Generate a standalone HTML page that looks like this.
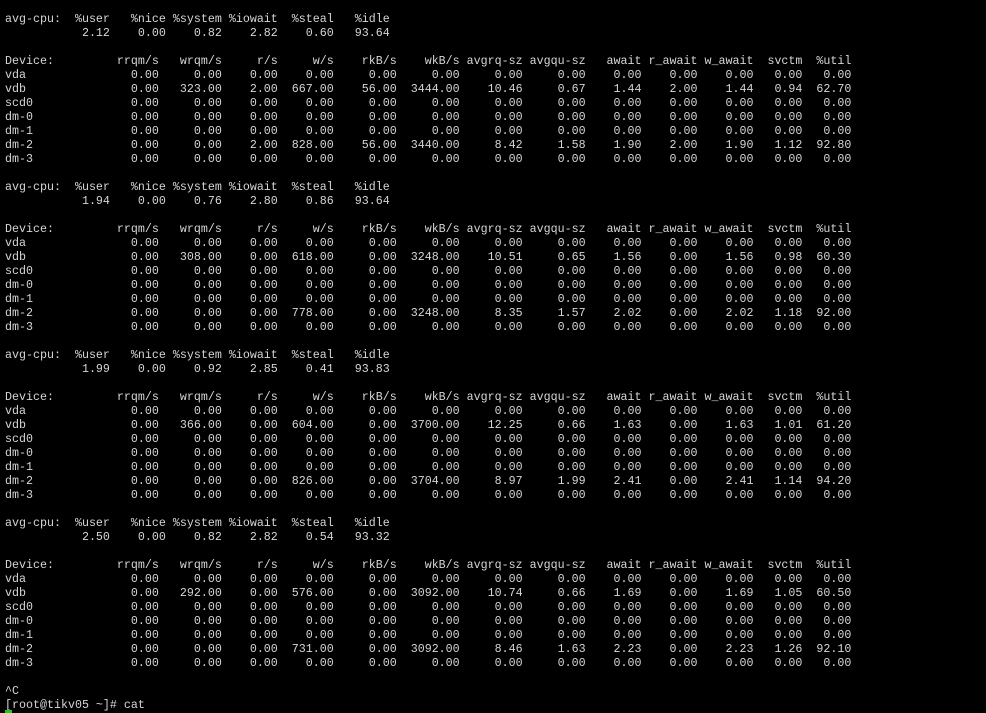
<!DOCTYPE html>
<html><head><meta charset="utf-8"><style>
html,body{margin:0;padding:0;background:#000;width:986px;height:713px;overflow:hidden}
pre{margin:0;padding:12px 0 0 5px;font-family:"Liberation Mono",monospace;font-size:11.667px;line-height:14px;color:#d6d6d6;white-space:pre}
.cur{position:absolute;left:5px;top:710px;width:7px;height:3px;background:#1ec81e}
</style></head><body><pre>avg-cpu:  %user   %nice %system %iowait  %steal   %idle
           2.12    0.00    0.82    2.82    0.60   93.64

Device:         rrqm/s   wrqm/s     r/s     w/s    rkB/s    wkB/s avgrq-sz avgqu-sz   await r_await w_await  svctm  %util
vda               0.00     0.00    0.00    0.00     0.00     0.00     0.00     0.00    0.00    0.00    0.00   0.00   0.00
vdb               0.00   323.00    2.00  667.00    56.00  3444.00    10.46     0.67    1.44    2.00    1.44   0.94  62.70
scd0              0.00     0.00    0.00    0.00     0.00     0.00     0.00     0.00    0.00    0.00    0.00   0.00   0.00
dm-0              0.00     0.00    0.00    0.00     0.00     0.00     0.00     0.00    0.00    0.00    0.00   0.00   0.00
dm-1              0.00     0.00    0.00    0.00     0.00     0.00     0.00     0.00    0.00    0.00    0.00   0.00   0.00
dm-2              0.00     0.00    2.00  828.00    56.00  3440.00     8.42     1.58    1.90    2.00    1.90   1.12  92.80
dm-3              0.00     0.00    0.00    0.00     0.00     0.00     0.00     0.00    0.00    0.00    0.00   0.00   0.00

avg-cpu:  %user   %nice %system %iowait  %steal   %idle
           1.94    0.00    0.76    2.80    0.86   93.64

Device:         rrqm/s   wrqm/s     r/s     w/s    rkB/s    wkB/s avgrq-sz avgqu-sz   await r_await w_await  svctm  %util
vda               0.00     0.00    0.00    0.00     0.00     0.00     0.00     0.00    0.00    0.00    0.00   0.00   0.00
vdb               0.00   308.00    0.00  618.00     0.00  3248.00    10.51     0.65    1.56    0.00    1.56   0.98  60.30
scd0              0.00     0.00    0.00    0.00     0.00     0.00     0.00     0.00    0.00    0.00    0.00   0.00   0.00
dm-0              0.00     0.00    0.00    0.00     0.00     0.00     0.00     0.00    0.00    0.00    0.00   0.00   0.00
dm-1              0.00     0.00    0.00    0.00     0.00     0.00     0.00     0.00    0.00    0.00    0.00   0.00   0.00
dm-2              0.00     0.00    0.00  778.00     0.00  3248.00     8.35     1.57    2.02    0.00    2.02   1.18  92.00
dm-3              0.00     0.00    0.00    0.00     0.00     0.00     0.00     0.00    0.00    0.00    0.00   0.00   0.00

avg-cpu:  %user   %nice %system %iowait  %steal   %idle
           1.99    0.00    0.92    2.85    0.41   93.83

Device:         rrqm/s   wrqm/s     r/s     w/s    rkB/s    wkB/s avgrq-sz avgqu-sz   await r_await w_await  svctm  %util
vda               0.00     0.00    0.00    0.00     0.00     0.00     0.00     0.00    0.00    0.00    0.00   0.00   0.00
vdb               0.00   366.00    0.00  604.00     0.00  3700.00    12.25     0.66    1.63    0.00    1.63   1.01  61.20
scd0              0.00     0.00    0.00    0.00     0.00     0.00     0.00     0.00    0.00    0.00    0.00   0.00   0.00
dm-0              0.00     0.00    0.00    0.00     0.00     0.00     0.00     0.00    0.00    0.00    0.00   0.00   0.00
dm-1              0.00     0.00    0.00    0.00     0.00     0.00     0.00     0.00    0.00    0.00    0.00   0.00   0.00
dm-2              0.00     0.00    0.00  826.00     0.00  3704.00     8.97     1.99    2.41    0.00    2.41   1.14  94.20
dm-3              0.00     0.00    0.00    0.00     0.00     0.00     0.00     0.00    0.00    0.00    0.00   0.00   0.00

avg-cpu:  %user   %nice %system %iowait  %steal   %idle
           2.50    0.00    0.82    2.82    0.54   93.32

Device:         rrqm/s   wrqm/s     r/s     w/s    rkB/s    wkB/s avgrq-sz avgqu-sz   await r_await w_await  svctm  %util
vda               0.00     0.00    0.00    0.00     0.00     0.00     0.00     0.00    0.00    0.00    0.00   0.00   0.00
vdb               0.00   292.00    0.00  576.00     0.00  3092.00    10.74     0.66    1.69    0.00    1.69   1.05  60.50
scd0              0.00     0.00    0.00    0.00     0.00     0.00     0.00     0.00    0.00    0.00    0.00   0.00   0.00
dm-0              0.00     0.00    0.00    0.00     0.00     0.00     0.00     0.00    0.00    0.00    0.00   0.00   0.00
dm-1              0.00     0.00    0.00    0.00     0.00     0.00     0.00     0.00    0.00    0.00    0.00   0.00   0.00
dm-2              0.00     0.00    0.00  731.00     0.00  3092.00     8.46     1.63    2.23    0.00    2.23   1.26  92.10
dm-3              0.00     0.00    0.00    0.00     0.00     0.00     0.00     0.00    0.00    0.00    0.00   0.00   0.00

^C
[root@tikv05 ~]# cat</pre><div class="cur"></div></body></html>
